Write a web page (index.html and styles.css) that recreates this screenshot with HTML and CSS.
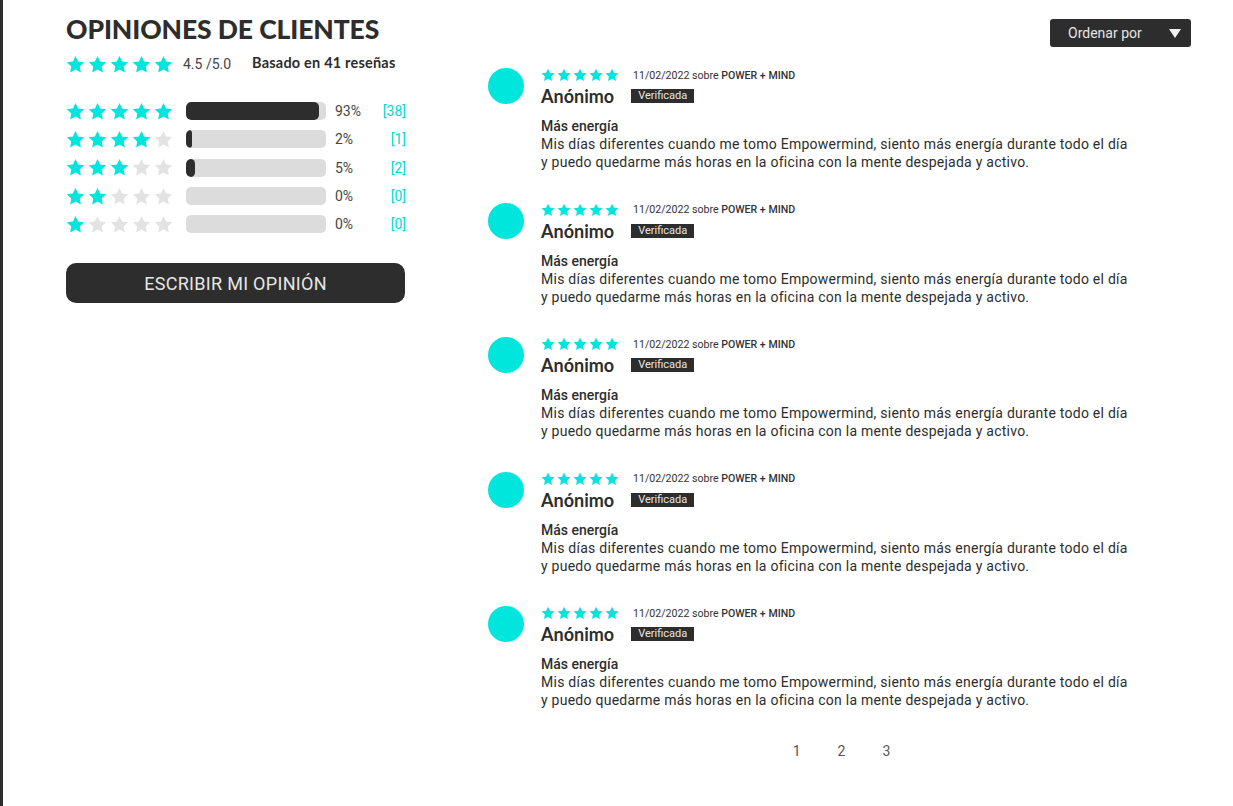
FILE: index.html
```html
<!DOCTYPE html>
<html lang="es">
<head>
<meta charset="utf-8">
<title>Opiniones de clientes</title>
<link rel="stylesheet" href="styles.css">
</head>
<body>
<svg width="0" height="0" class="defs">
  <defs>
    <symbol id="star" viewBox="0 0 24 24"><path d="M12 1.2l3.3 7.1 7.7.9-5.7 5.3 1.5 7.7L12 18.4l-6.8 3.8 1.5-7.7L1 9.2l7.7-.9z"/></symbol>
  </defs>
</svg>
<div class="page">
  <aside class="summary">
    <h1 class="title">OPINIONES DE CLIENTES</h1>
    <div class="overall">
      <div class="stars big">
        <svg class="on"><use href="#star"/></svg><svg class="on"><use href="#star"/></svg><svg class="on"><use href="#star"/></svg><svg class="on"><use href="#star"/></svg><svg class="on"><use href="#star"/></svg>
      </div>
      <span class="score">4.5 /5.0</span>
      <span class="based">Basado en 41 reseñas</span>
    </div>
    <div class="histogram">
      <div class="hrow">
        <div class="stars big"><svg class="on"><use href="#star"/></svg><svg class="on"><use href="#star"/></svg><svg class="on"><use href="#star"/></svg><svg class="on"><use href="#star"/></svg><svg class="on"><use href="#star"/></svg></div>
        <div class="bar"><div class="fill" style="width:95%"></div></div>
        <span class="pct">93%</span><span class="cnt">[38]</span>
      </div>
      <div class="hrow">
        <div class="stars big"><svg class="on"><use href="#star"/></svg><svg class="on"><use href="#star"/></svg><svg class="on"><use href="#star"/></svg><svg class="on"><use href="#star"/></svg><svg class="off"><use href="#star"/></svg></div>
        <div class="bar"><div class="fill" style="width:6px"></div></div>
        <span class="pct">2%</span><span class="cnt">[1]</span>
      </div>
      <div class="hrow">
        <div class="stars big"><svg class="on"><use href="#star"/></svg><svg class="on"><use href="#star"/></svg><svg class="on"><use href="#star"/></svg><svg class="off"><use href="#star"/></svg><svg class="off"><use href="#star"/></svg></div>
        <div class="bar"><div class="fill" style="width:9px"></div></div>
        <span class="pct">5%</span><span class="cnt">[2]</span>
      </div>
      <div class="hrow">
        <div class="stars big"><svg class="on"><use href="#star"/></svg><svg class="on"><use href="#star"/></svg><svg class="off"><use href="#star"/></svg><svg class="off"><use href="#star"/></svg><svg class="off"><use href="#star"/></svg></div>
        <div class="bar"></div>
        <span class="pct">0%</span><span class="cnt">[0]</span>
      </div>
      <div class="hrow">
        <div class="stars big"><svg class="on"><use href="#star"/></svg><svg class="off"><use href="#star"/></svg><svg class="off"><use href="#star"/></svg><svg class="off"><use href="#star"/></svg><svg class="off"><use href="#star"/></svg></div>
        <div class="bar"></div>
        <span class="pct">0%</span><span class="cnt">[0]</span>
      </div>
    </div>
    <button class="write">ESCRIBIR MI OPINIÓN</button>
  </aside>

  <main class="reviews">
    <div class="toolbar">
      <div class="sort">Ordenar por <span class="tri"></span></div>
    </div>
    <div class="list">
      <article class="review">
        <div class="avatar"></div>
        <div class="rbody">
          <div class="meta"><div class="stars small"><svg class="on"><use href="#star"/></svg><svg class="on"><use href="#star"/></svg><svg class="on"><use href="#star"/></svg><svg class="on"><use href="#star"/></svg><svg class="on"><use href="#star"/></svg></div><span class="date">11/02/2022 sobre <b>POWER + MIND</b></span></div>
          <div class="who"><span class="name">Anónimo</span><span class="badge">Verificada</span></div>
          <h3 class="rtitle">Más energía</h3>
          <p class="rtext">Mis días diferentes cuando me tomo Empowermind, siento más energía durante todo el día<br>y puedo quedarme más horas en la oficina con la mente despejada y activo.</p>
        </div>
      </article>
      <article class="review">
        <div class="avatar"></div>
        <div class="rbody">
          <div class="meta"><div class="stars small"><svg class="on"><use href="#star"/></svg><svg class="on"><use href="#star"/></svg><svg class="on"><use href="#star"/></svg><svg class="on"><use href="#star"/></svg><svg class="on"><use href="#star"/></svg></div><span class="date">11/02/2022 sobre <b>POWER + MIND</b></span></div>
          <div class="who"><span class="name">Anónimo</span><span class="badge">Verificada</span></div>
          <h3 class="rtitle">Más energía</h3>
          <p class="rtext">Mis días diferentes cuando me tomo Empowermind, siento más energía durante todo el día<br>y puedo quedarme más horas en la oficina con la mente despejada y activo.</p>
        </div>
      </article>
      <article class="review">
        <div class="avatar"></div>
        <div class="rbody">
          <div class="meta"><div class="stars small"><svg class="on"><use href="#star"/></svg><svg class="on"><use href="#star"/></svg><svg class="on"><use href="#star"/></svg><svg class="on"><use href="#star"/></svg><svg class="on"><use href="#star"/></svg></div><span class="date">11/02/2022 sobre <b>POWER + MIND</b></span></div>
          <div class="who"><span class="name">Anónimo</span><span class="badge">Verificada</span></div>
          <h3 class="rtitle">Más energía</h3>
          <p class="rtext">Mis días diferentes cuando me tomo Empowermind, siento más energía durante todo el día<br>y puedo quedarme más horas en la oficina con la mente despejada y activo.</p>
        </div>
      </article>
      <article class="review">
        <div class="avatar"></div>
        <div class="rbody">
          <div class="meta"><div class="stars small"><svg class="on"><use href="#star"/></svg><svg class="on"><use href="#star"/></svg><svg class="on"><use href="#star"/></svg><svg class="on"><use href="#star"/></svg><svg class="on"><use href="#star"/></svg></div><span class="date">11/02/2022 sobre <b>POWER + MIND</b></span></div>
          <div class="who"><span class="name">Anónimo</span><span class="badge">Verificada</span></div>
          <h3 class="rtitle">Más energía</h3>
          <p class="rtext">Mis días diferentes cuando me tomo Empowermind, siento más energía durante todo el día<br>y puedo quedarme más horas en la oficina con la mente despejada y activo.</p>
        </div>
      </article>
      <article class="review">
        <div class="avatar"></div>
        <div class="rbody">
          <div class="meta"><div class="stars small"><svg class="on"><use href="#star"/></svg><svg class="on"><use href="#star"/></svg><svg class="on"><use href="#star"/></svg><svg class="on"><use href="#star"/></svg><svg class="on"><use href="#star"/></svg></div><span class="date">11/02/2022 sobre <b>POWER + MIND</b></span></div>
          <div class="who"><span class="name">Anónimo</span><span class="badge">Verificada</span></div>
          <h3 class="rtitle">Más energía</h3>
          <p class="rtext">Mis días diferentes cuando me tomo Empowermind, siento más energía durante todo el día<br>y puedo quedarme más horas en la oficina con la mente despejada y activo.</p>
        </div>
      </article>
    </div>
    <nav class="pager"><span>1</span><span>2</span><span>3</span></nav>
  </main>
</div>
</body>
</html>
```

FILE: styles.css
```css
* { box-sizing: border-box; }
html, body { margin: 0; padding: 0; background: #fff; }
body { font-family: Roboto, "Noto Sans", sans-serif; color: #2d2d2d; }
.defs { position: absolute; width: 0; height: 0; overflow: hidden; }

.page {
  display: flex;
  min-height: 806px;
  border-left: 3px solid #2d2d2d;
  padding-left: 63px;
}

.summary { width: 340px; flex: none; }
.title {
  margin: 0;
  padding-top: 13px;
  font-family: Lato, "Open Sans", sans-serif;
  font-weight: 900;
  font-size: 26.5px;
  line-height: 32px;
  letter-spacing: -0.1px;
  color: #2d2d2d;
}

.stars { display: flex; align-items: center; }
.stars svg { display: block; flex: none; }
.stars .on { fill: #00e5dc; }
.stars .off { fill: #e3e3e3; }
.stars.big { gap: 3px; }
.stars.big svg { width: 19px; height: 19px; }
.stars.small { gap: 2px; }
.stars.small svg { width: 14px; height: 14px; }

.overall {
  display: flex;
  align-items: center;
  height: 24px;
  margin-top: 7px;
}
.score { margin-left: 10px; font-size: 14px; color: #444; }
.based {
  margin-left: 21px;
  margin-bottom: 3px;
  font-family: Lato, sans-serif;
  font-weight: 700;
  font-size: 14.5px;
  letter-spacing: 0.2px;
  color: #2d2d2d;
}

.histogram { margin-top: 21px; }
.hrow { display: flex; align-items: center; height: 28.3px; }
.bar {
  margin-left: 13px;
  width: 140px;
  height: 18px;
  background: #dcdcdc;
  border-radius: 5px;
  overflow: hidden;
  flex: none;
}
.fill { height: 100%; background: #2d2d2d; border-radius: 5px; }
.pct { margin-left: 9px; font-size: 14px; color: #444; width: 40px; }
.cnt { margin-left: auto; font-size: 14px; color: #00d8d0; }

.write {
  display: block;
  width: 339px;
  height: 40px;
  margin-top: 25px;
  border: 0;
  border-radius: 10px;
  background: #2d2d2d;
  color: #e6e6e6;
  font-family: Roboto, sans-serif;
  font-size: 18px;
  letter-spacing: 0.3px;
  cursor: pointer;
}

.reviews { margin-left: 82px; width: 703px; flex: none; }
.toolbar { display: flex; justify-content: flex-end; padding-top: 19px; }
.sort {
  display: flex;
  align-items: center;
  width: 141px;
  height: 28px;
  padding: 0 10px 0 18px;
  background: #2d2d2d;
  border-radius: 3px;
  color: #e6e6e6;
  font-size: 14px;
}
.tri {
  margin-left: auto;
  width: 0; height: 0;
  border-left: 6px solid transparent;
  border-right: 6px solid transparent;
  border-top: 9px solid #f2f2f2;
}

.list { margin-top: 21px; }
.review { display: flex; height: 134.5px; }
.avatar {
  width: 36px; height: 36px;
  border-radius: 50%;
  background: #00e5dc;
  flex: none;
  margin-right: 17px;
}
.rbody { flex: 1; }
.meta { display: flex; align-items: center; height: 14px; }
.date { margin-left: 14px; font-size: 10.6px; color: #333; }
.date b { font-weight: 500; }
.who { display: flex; align-items: center; height: 20px; margin-top: 4px; }
.name { font-family: Lato, sans-serif; font-weight: 700; font-size: 18px; color: #2d2d2d; }
.badge {
  margin-left: 17px;
  height: 14px;
  padding: 0 7px;
  background: #2d2d2d;
  color: #e6e6e6;
  font-size: 11px;
  line-height: 14px;
}
.rtitle {
  margin: 11px 0 0;
  font-size: 14px;
  font-weight: 500;
  line-height: 18px;
  color: #2d2d2d;
}
.rtext {
  margin: 0;
  font-size: 14px;
  letter-spacing: 0.25px;
  line-height: 18px;
  color: #2d2d2d;
}

.pager {
  display: flex;
  justify-content: center;
  gap: 37px;
  margin-top: 2px;
  padding-left: 4px;
  font-size: 14px;
  color: #555;
}
```
